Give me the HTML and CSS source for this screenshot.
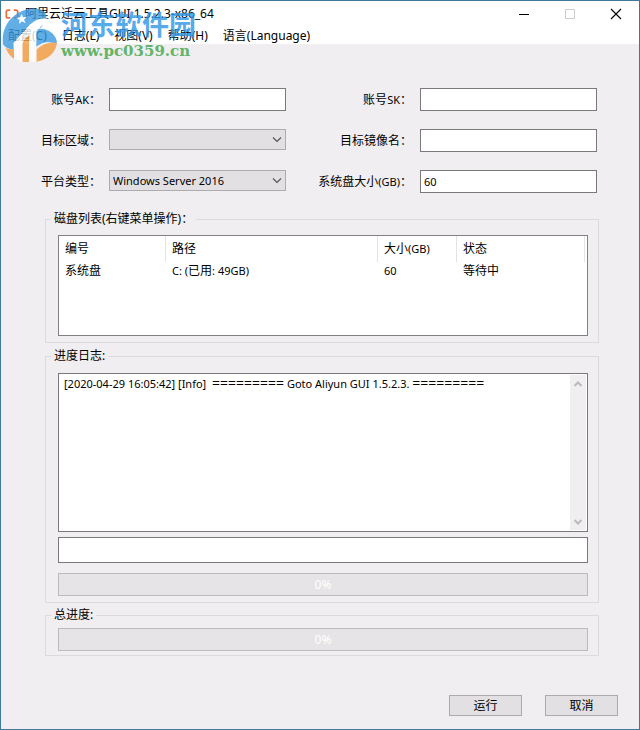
FILE: index.html
```html
<!DOCTYPE html>
<html lang="zh-CN">
<head>
  <title>阿里云迁云工具GUI 1.5.2.3-x86_64</title>

  <meta charset='utf-8'>

  <link rel="stylesheet" href="styles.css">
</head>
<body>
  <header class='title_bar'>
    <svg class='app_icon' viewBox='0 0 16 12' aria-hidden='true'>
      <path d='M6 1.5H3.5Q1.5 1.5 1.5 3.5V8.500Q1.500 10.500 3.500 10.500H6M10 1.500H12.500Q14.500 1.500 14.500 3.500V8.500Q14.500 10.500 12.500 10.500H10' fill='none' stroke='#e8703c' stroke-width='2'/>
    </svg>
    <h1 class='title'>阿里云迁云工具GUI 1.5.2.3-x86_64</h1>
    <div class='window_buttons'>
      <button type='button' aria-label='最小化'>
        <svg viewBox='0 0 10 10'><path d='M0 5.500h10' stroke='#000'/></svg>
      </button>
      <button type='button' aria-label='最大化' disabled>
        <svg viewBox='0 0 10 10'><path d='M.5.5h9v9h-9z' fill='none' stroke='#ccc'/></svg>
      </button>
      <button type='button' aria-label='关闭'>
        <svg viewBox='0 0 10 10'><path d='M0 0l10 10M10 0L0 10' stroke='#000' stroke-width='1.100'/></svg>
      </button>
    </div>
  </header>

  <nav class='menu_bar'>
    <button type='button'>配置(C)</button>
    <button type='button'>日志(L)</button>
    <button type='button'>视图(V)</button>
    <button type='button'>帮助(H)</button>
    <button type='button'>语言(Language)</button>
  </nav>

  <form name='migrate_form' onsubmit='return false'>
    <div class='settings'>
      <label for='ak'>账号<span class='en'>AK</span>：</label>
      <input id='ak' type='text' autocomplete='off'>
      <label for='sk'>账号<span class='en'>SK</span>：</label>
      <input id='sk' type='text' autocomplete='off'>

      <label for='region'>目标区域：</label>
      <select id='region'><option></option></select>
      <label for='image_name'>目标镜像名：</label>
      <input id='image_name' type='text' autocomplete='off'>

      <label for='platform'>平台类型：</label>
      <select id='platform'><option>Windows Server 2016</option></select>
      <label for='disk_size'>系统盘大小<span class='en'>(GB)</span>：</label>
      <input id='disk_size' type='text' value='60' autocomplete='off'>
    </div>

    <fieldset class='disk_group'>
      <legend>磁盘列表(右键菜单操作)：</legend>
      <div class='disk_list'>
        <table>
          <colgroup>
            <col class='col_id'><col class='col_path'><col class='col_size'><col>
          </colgroup>
          <thead>
            <tr><th>编号</th><th>路径</th><th>大小<span class='en'>(GB)</span></th><th>状态</th></tr>
          </thead>
          <tbody>
            <tr><td>系统盘</td><td><span class='en'>C: (</span>已用<span class='en'>: 49GB)</span></td><td><span class='en'>60</span></td><td>等待中</td></tr>
          </tbody>
        </table>
      </div>
    </fieldset>

    <fieldset class='log_group'>
      <legend>进度日志:</legend>
      <div class='log'>
        <div class='log_text' role='log' aria-label='进度日志' tabindex='0'>[2020-04-29 16:05:42] [Info]  <span class='rule'>=========</span> Goto Aliyun GUI 1.5.2.3. <span class='rule'>=========</span></div>
        <div class='scroll_bar'>
          <button type='button' aria-label='向上' disabled>
            <svg viewBox='0 0 8 6'><path d='M.5 5L4 1.500 7.500 5' fill='none' stroke='#bbb9bc' stroke-width='2'/></svg>
          </button>
          <button type='button' aria-label='向下' disabled>
            <svg viewBox='0 0 8 6'><path d='M.5 1L4 4.500 7.500 1' fill='none' stroke='#bbb9bc' stroke-width='2'/></svg>
          </button>
        </div>
      </div>
      <input class='current_step' type='text' aria-label='当前步骤' readonly>
      <div class='progress' role='progressbar' aria-label='当前进度' aria-valuenow='0'>0%</div>
    </fieldset>

    <fieldset class='total_group'>
      <legend>总进度:</legend>
      <div class='progress' role='progressbar' aria-label='总进度' aria-valuenow='0'>0%</div>
    </fieldset>

    <div class='actions'>
      <button type='submit'>运行</button>
      <button type='button'>取消</button>
    </div>
  </form>

  <div class='watermark'>
    <svg class='watermark_logo' viewBox='0 0 174 168' aria-hidden='true'>
      <path d='M6 112C0 60 32 16 84 6 112 0 140 10 136 34L120 62 88 52 38 108 38 128Q16 126 6 112Z' fill='#3a9ae0'/>
      <path d='M104 66Q146 60 164 92 170 106 166 112 134 96 104 120Z' fill='#3a9ae0'/>
      <path d='M14 122Q24 128 40 126V156Q22 144 14 122ZM64 108Q72 90 84 86V165Q74 166 64 164ZM106 128Q136 100 168 108 160 154 106 164Z' fill='#f39a3c'/>
      <path d='M38 108L88 52Q112 30 136 34 146 36 150 44 124 46 106 74V164H84V86Q72 92 64 108V164L40 156Z' fill='#fff'/>
      <path d='M62 20l4 11 12-1-9 8 5 11-11-6-9 8 2-12-10-6 12-2z' fill='#fff'/>
    </svg>
    <div class='watermark_text'>
      <span class='watermark_name'>河东软件园</span>
      <span class='watermark_url'>www.pc0359.cn</span>
    </div>
  </div>
</body>
</html>
```
FILE: styles.css
```css
*, ::before, ::after {
  box-sizing: border-box;
  margin: 0; padding: 0;
}

body {
  position: relative;
  min-height: 100vh;
  border: 1px solid #3f7898;
  background: #f0eef1;
  color: #000;
  font: 12px/14px "Noto Sans", "Noto Sans CJK SC", sans-serif;
}
button, input, select {
  font: inherit;
  color: inherit;
  border-radius: 0;
}
.en, input, select {
  font-size: 11px;
}

/* 标题栏 */
.title_bar {
  display: flex;
  align-items: center;
  height: 25px;
  padding-left: 4px;
  background: #fff;
}
.app_icon {
  width: 14px; height: 12px;
  margin-right: 6px;
}
.title {
  flex: 1;
  font-size: 12px; font-weight: normal;
  white-space: nowrap;
}
.window_buttons {
  display: flex;
}
.window_buttons button {
  width: 46px; height: 24px;
  border: 0;
  background: none;
}
.window_buttons svg {
  display: block;
  width: 10px; height: 10px;
  margin: auto;
  overflow: visible;
}

/* 菜单栏 */
.menu_bar {
  display: flex;
  gap: 15px;
  height: 18px;
  padding: 2px 0 0 7px;
  background: #fff;
}
.menu_bar button {
  border: 0;
  background: none;
  white-space: nowrap;
}

/* 账号与镜像设置 */
.settings {
  display: grid;
  grid-template-columns: 60px 1fr 118px 1fr;
  gap: 18px 8px;
  padding: 44px 42px 0 40px;
}
.settings label {
  line-height: 23px;
  text-align: right;
  white-space: nowrap;
}
.settings input, .settings select, .current_step {
  width: 100%; height: 23px;
  border: 1px solid #7a787b;
  background: #fff;
  padding: 0 3px;
}
.settings select {
  appearance: none;
  height: 21px;
  border-color: #adabae;
  background: #e2e0e3 url("data:image/svg+xml,%3Csvg xmlns='http://www.w3.org/2000/svg' width='10' height='6'%3E%3Cpath d='M1 .5l4 4 4-4' fill='none' stroke='%23555' stroke-width='1.2'/%3E%3C/svg%3E") no-repeat right 3px center;
}

/* 分组框 */
fieldset {
  min-width: 0;
  margin: 0 40px 0 44px;
  border: 1px solid #dcdadd;
}
legend {
  margin-left: -7px;
  padding: 0 3px;
}
.disk_group {
  margin-top: 19px;
  padding: 9px 10px 6px 12px;
}
.log_group {
  margin-top: 6px;
  padding: 10px 10px 6px 12px;
}
.total_group {
  margin-top: 5px;
  padding: 6px 10px 4px 12px;
}

.disk_list {
  height: 101px;
  border: 1px solid #828085;
  background: #fff;
  padding-right: 2px;
}
.disk_list table {
  width: 100%;
  table-layout: fixed;
  border-collapse: separate; border-spacing: 0;
}
.col_id { width: 107px; }
.col_path { width: 212px; }
.col_size { width: 79px; }
.disk_list th, .disk_list td {
  padding-left: 6px;
  font-weight: normal;
  text-align: left;
  white-space: nowrap;
}
.disk_list th {
  height: 26px;
  border-right: 1px solid #e4e2e5;
}
.disk_list td {
  height: 18px;
}

.log {
  display: flex;
  height: 159px;
  border: 1px solid #7a787b;
  background: #fff;
  padding: 1px;
}
.log_text {
  flex: 1;
  min-width: 0;
  padding: 1px 4px;
  outline: 0;
  font-size: 11px;
  white-space: pre-wrap;
}
.rule {
  font-size: 14px;
}
.scroll_bar {
  display: flex; flex-direction: column; justify-content: space-between;
  width: 16px;
  background: #f0eef1;
}
.scroll_bar button {
  height: 17px;
  border: 0;
  background: none;
}
.scroll_bar svg {
  display: block;
  width: 8px; height: 6px;
  margin: auto;
}
.current_step {
  display: block;
  height: 26px;
  margin: 5px 0 10px;
}
.progress {
  height: 23px;
  border: 1px solid #bcbabd;
  background: #e6e4e7;
  color: #fff;
  font-size: 12px; line-height: 21px;
  text-align: center;
}

.actions {
  display: flex; justify-content: flex-end;
  gap: 23px;
  padding: 39px 21px 13px;
}
.actions button {
  width: 73px; height: 21px;
  border: 1px solid #adabae;
  background: #e2e0e3;
}

/* 左上角水印 */
.watermark {
  position: absolute; top: 6px; left: 0;
  display: flex;
  gap: 2px;
  opacity: .8;
  pointer-events: none;
}
.watermark_logo {
  width: 58px; height: 56px;
}
.watermark_text {
  display: flex; flex-direction: column;
  gap: 2px;
  padding-top: 4px;
  font-weight: bold;
  white-space: nowrap;
}
.watermark_name {
  color: #2f97e6;
  font-size: 27px; line-height: 28px;
}
.watermark_url {
  color: #3fa644;
  font-family: "DejaVu Serif", serif;
  font-size: 15px; line-height: 20px;
}
```
